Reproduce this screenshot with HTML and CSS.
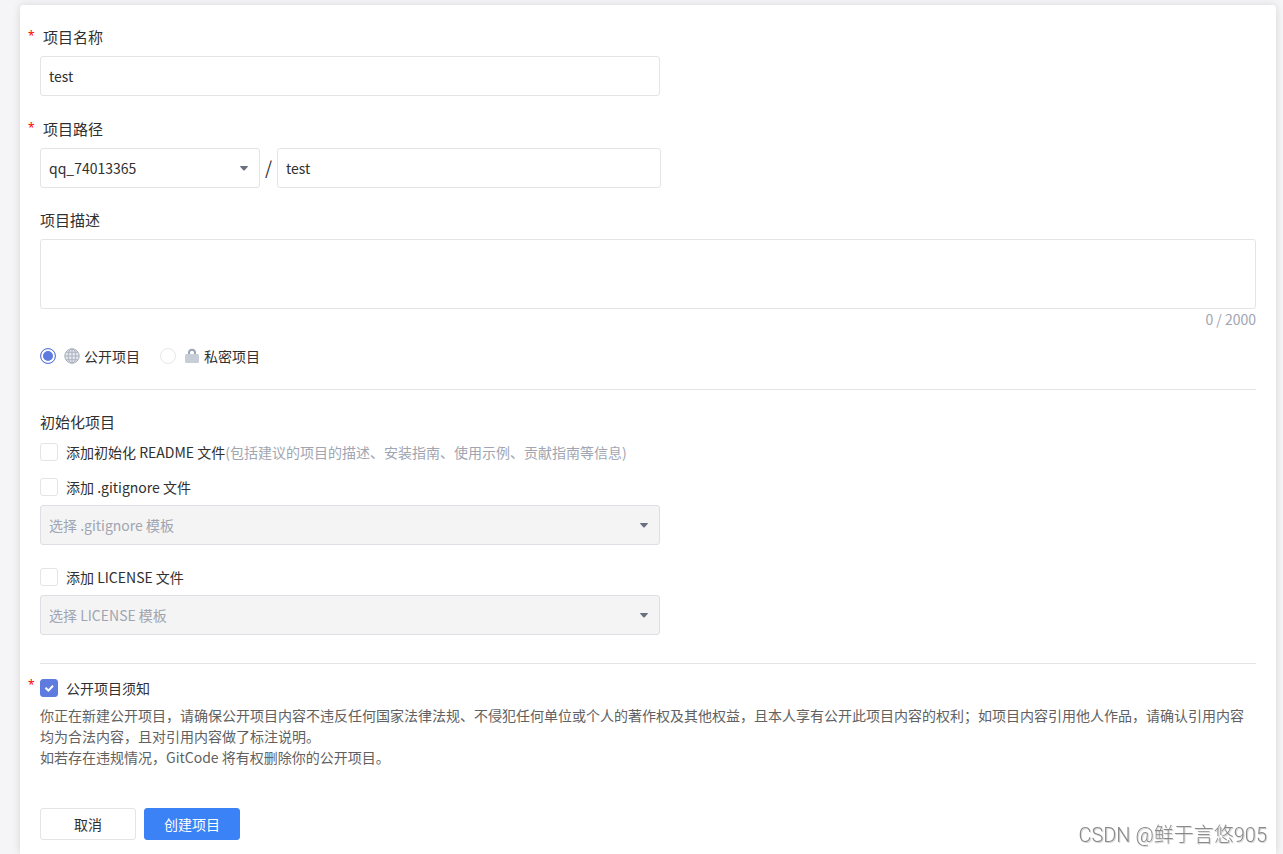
FILE: index.html
```html
<!DOCTYPE html>
<html lang="zh-CN">
<head>
<meta charset="utf-8">
<meta name="viewport" content="width=device-width, initial-scale=1">
<title>新建项目</title>
<link rel="stylesheet" href="styles.css">
</head>
<body>
<main class="card">
  <form class="form">
    <div class="field name">
      <label class="label required" for="name">项目名称</label>
      <input class="control half" id="name" type="text" value="test">
    </div>
    <div class="field">
      <label class="label required" for="path">项目路径</label>
      <div class="path-row">
        <div class="select-wrap owner">
          <select class="control" aria-label="命名空间"><option>qq_74013365</option></select>
          <svg class="caret" viewBox="0 0 8 5" aria-hidden="true"><path d="M0 0.5Q0 0 0.6 0H7.4Q8 0 8 0.5L4.7 4.2Q4 4.8 3.3 4.2Z"/></svg>
        </div>
        <span class="slash">/</span>
        <input class="control path-input" id="path" type="text" value="test">
      </div>
    </div>
    <div class="field desc">
      <label class="label" for="desc">项目描述</label>
      <textarea class="control area" id="desc"></textarea>
      <div class="counter">0 / 2000</div>
    </div>

    <div class="radios">
      <label class="radio-label">
        <input class="radio" type="radio" name="visibility" checked>
        <svg class="icon" viewBox="0 0 16 16" aria-hidden="true">
          <circle class="globe-fill" cx="8" cy="8" r="7.2"/>
          <path class="globe-line" d="M8 1v14M1 8h14M2.4 4.3h11.2M2.4 11.7h11.2"/>
          <ellipse class="globe-line" cx="8" cy="8" rx="3.8" ry="7.2"/>
        </svg>
        <span>公开项目</span>
      </label>
      <label class="radio-label">
        <input class="radio" type="radio" name="visibility">
        <svg class="icon" viewBox="0 0 16 16" aria-hidden="true">
          <path class="lock-ring" d="M5 6.5V4.8a3 3 0 0 1 6 0v1.7"/>
          <rect class="lock-body" x="1" y="6" width="14" height="9" rx="1.5"/>
        </svg>
        <span>私密项目</span>
      </label>
    </div>

    <section class="section init">
      <h2 class="title">初始化项目</h2>
      <label class="check-label">
        <input class="check" type="checkbox">
        <span>添加初始化 README 文件<span class="hint">(包括建议的项目的描述、安装指南、使用示例、贡献指南等信息)</span></span>
      </label>
      <div class="option">
        <label class="check-label"><input class="check" type="checkbox"><span>添加 .gitignore 文件</span></label>
        <div class="select-wrap half">
          <select class="control" disabled aria-label=".gitignore 模板"><option>选择 .gitignore 模板</option></select>
          <svg class="caret" viewBox="0 0 8 5" aria-hidden="true"><path d="M0 0.5Q0 0 0.6 0H7.4Q8 0 8 0.5L4.7 4.2Q4 4.8 3.3 4.2Z"/></svg>
        </div>
      </div>
      <div class="option last">
        <label class="check-label"><input class="check" type="checkbox"><span>添加 LICENSE 文件</span></label>
        <div class="select-wrap half">
          <select class="control" disabled aria-label="LICENSE 模板"><option>选择 LICENSE 模板</option></select>
          <svg class="caret" viewBox="0 0 8 5" aria-hidden="true"><path d="M0 0.5Q0 0 0.6 0H7.4Q8 0 8 0.5L4.7 4.2Q4 4.8 3.3 4.2Z"/></svg>
        </div>
      </div>
    </section>

    <section class="section notice">
      <label class="check-label must">
        <span class="check-box">
          <input class="check" type="checkbox" checked>
          <svg class="tick" viewBox="0 0 18 18" aria-hidden="true"><path d="M5.5 8.8L8.4 11.6L13 6.8"/></svg>
        </span>
        <span>公开项目须知</span>
      </label>
      <div class="terms">
        <p>你正在新建公开项目，请确保公开项目内容不违反任何国家法律法规、不侵犯任何单位或个人的著作权及其他权益，且本人享有公开此项目内容的权利；如项目内容引用他人作品，请确认引用内容均为合法内容，且对引用内容做了标注说明。</p>
        <p>如若存在违规情况，GitCode 将有权删除你的公开项目。</p>
      </div>
    </section>

    <div class="actions">
      <button class="button" type="button">取消</button>
      <button class="button primary" type="button">创建项目</button>
    </div>
  </form>
</main>
<div class="watermark">CSDN @鲜于言悠905</div>
</body>
</html>
```

FILE: styles.css
```css
* { box-sizing: border-box; }
body {
  margin: 0;
  padding: 5px 7px 0 20px;
  background: #f5f5f8;
  color: #303030;
  font: 14px/20px "Noto Sans CJK SC", sans-serif;
}
.card {
  min-height: calc(100vh - 5px);
  padding: 20px 20px 14px;
  background: #fff;
  border-radius: 4px 4px 0 0;
  box-shadow: 0 0 8px rgba(0, 0, 0, 0.12);
}
.field { margin-bottom: 20px; }
.name { margin-bottom: 21px; }
.desc { margin-bottom: 15px; }
.label {
  display: block;
  margin-bottom: 8px;
  font-size: 15px;
  line-height: 23px;
}
.required, .must { position: relative; }
.required { padding-left: 3px; }
.required::before, .must::before {
  content: "*";
  position: absolute;
  left: -12px;
  top: 0;
  color: #f00;
  font: 12px/21px "Noto Sans", sans-serif;
}
.must::before { top: -4px; }
.control {
  display: block;
  width: 100%;
  height: 40px;
  padding: 0 8px;
  border: 1px solid #e3e4e6;
  border-radius: 3px;
  background: #fff;
  color: #303030;
  font: inherit;
  appearance: none;
  outline: none;
}
.control:disabled {
  background: #f4f4f4;
  border-color: #dedfe5;
  color: #a0a5b1;
  opacity: 1;
}
.half { width: 100%; max-width: 620px; }
.area { height: 70px; padding: 8px; resize: none; }
.counter { color: #a0a5b1; text-align: right; }
.path-row { display: flex; align-items: center; max-width: 621px; }
.owner { width: 220px; }
.slash { width: 17px; text-align: center; font-size: 18px; line-height: 38px; height: 40px; }
.path-input { flex: 1; min-width: 0; }
.select-wrap { position: relative; }
.caret {
  position: absolute;
  right: 12px;
  top: 18px;
  width: 8px;
  height: 5px;
  fill: #6b7080;
  pointer-events: none;
}
.radios { display: flex; gap: 20px; padding-bottom: 21px; }
.radio-label { display: flex; align-items: center; height: 24px; gap: 4px; }
.radio {
  appearance: none;
  width: 16px;
  height: 16px;
  margin: 0 4px 0 0;
  border: 1px solid #e7e8ea;
  border-radius: 50%;
  background: #fff;
}
.radio:checked {
  border-color: #5e7ce0;
  background: #5e7ce0;
  box-shadow: inset 0 0 0 2px #fff;
}
.icon { width: 16px; height: 16px; fill: none; }
.globe-fill { fill: #dfe3ec; stroke: #a5abb7; }
.globe-line { stroke: #a5abb7; stroke-width: 0.8; }
.lock-ring { stroke: #9ca6b4; stroke-width: 2; }
.lock-body { fill: #c8ced8; }
.section { border-top: 1px solid #e3e4e6; }
.init { padding: 20px 0 28px; }
.title { margin: 0 0 8px; font-size: 15px; font-weight: 400; line-height: 24px; }
.check-label { display: flex; align-items: center; gap: 8px; min-height: 20px; }
.check {
  appearance: none;
  display: block;
  flex: none;
  width: 18px;
  height: 18px;
  margin: 0;
  border: 1px solid #e3e4e6;
  border-radius: 3px;
  background: #fff;
}
.check:checked { background: #5e7ce0; border-color: #5e7ce0; }
.check-box { position: relative; }
.tick {
  position: absolute;
  inset: 0;
  fill: none;
  stroke: #fff;
  stroke-width: 2;
  pointer-events: none;
}
.hint { color: #a0a5b1; }
.option { display: grid; gap: 8px; margin-top: 15px; }
.last { margin-top: 22px; }
.notice { padding-top: 14px; }
.terms { margin-top: 7px; color: #616161; line-height: 21px; }
.terms p { margin: 0; }
.actions { display: flex; gap: 8px; margin-top: 40px; }
.button {
  width: 96px;
  height: 32px;
  padding: 0;
  border: 1px solid #e3e4e6;
  border-radius: 3px;
  background: #fff;
  color: #303030;
  font: inherit;
}
.primary { border-color: #3b82f6; background: #3b82f6; color: #fff; }
.watermark {
  position: fixed;
  right: 16px;
  bottom: 5px;
  color: #8a8a8a;
  font: 300 20px/28px Roboto, "Noto Sans CJK SC", sans-serif;
  text-shadow: 1px 1px 0 #d8d8d8;
}
```
